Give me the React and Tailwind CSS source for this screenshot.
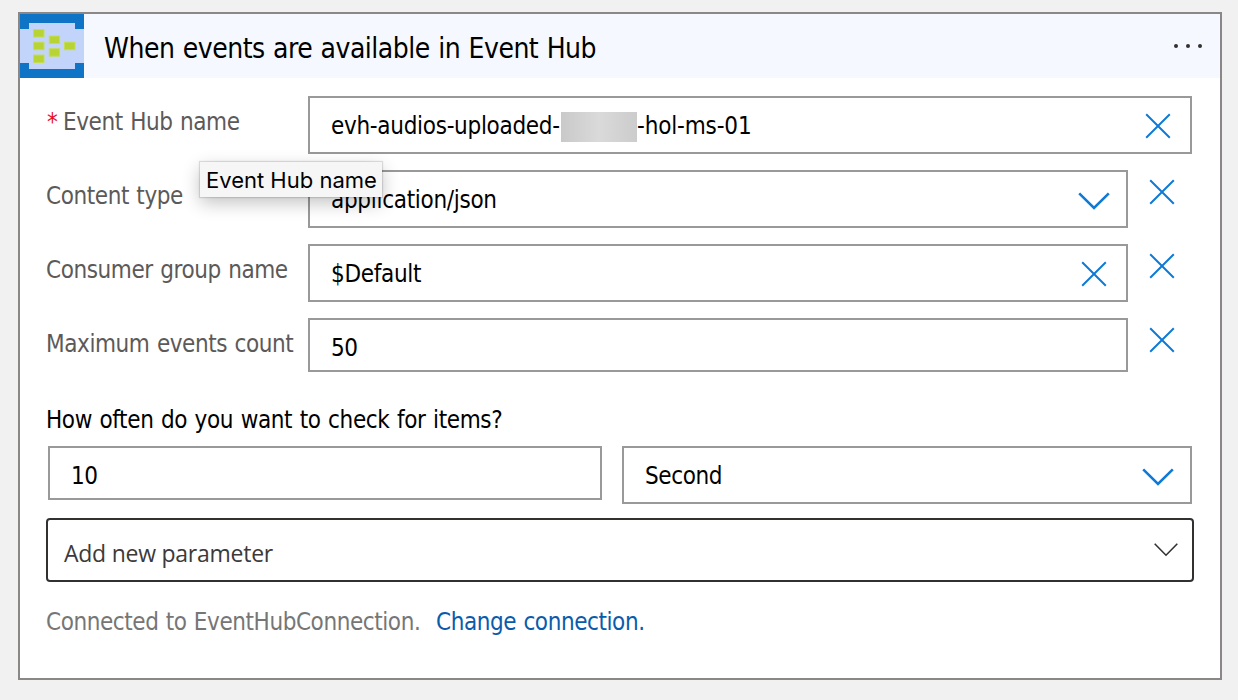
function Cross({ className = "" }) {
  return (
    <svg width="26" height="26" viewBox="0 0 26 26" fill="none" stroke="#0f7ad6" strokeWidth="2" className={`shrink-0 ${className}`}>
      <path d="M1.2 1.2 24.8 24.8M24.8 1.2 1.2 24.8" />
    </svg>
  );
}

function Chevron({ className = "" }) {
  return (
    <svg width="32" height="18" viewBox="0 0 32 18" fill="none" stroke="#0f7ad6" strokeWidth="2.6" className={`shrink-0 ${className}`}>
      <path d="M1.2 1.4 16 16 30.8 1.4" />
    </svg>
  );
}

function EventHubIcon() {
  return (
    <svg width="64" height="64" viewBox="0 0 64 64" className="shrink-0">
      <rect width="64" height="64" fill="#c3d4fb" />
      <path d="M0 0h64v15h-9V9H9v6H0zM0 64h64V49h-9v6H9v-6H0z" fill="#1074c6" />
      <g fill="#b8d434" stroke="#c4dd55" strokeWidth="1">
        <rect x="13.5" y="15.5" width="10.5" height="7.5" />
        <rect x="13.5" y="28.2" width="10.5" height="7.5" />
        <rect x="13.5" y="41" width="10.5" height="7.5" />
        <rect x="29.3" y="22" width="10.3" height="7.5" />
        <rect x="29.3" y="34.7" width="10.3" height="7.5" />
        <rect x="44.5" y="28.2" width="10.5" height="7.5" />
      </g>
    </svg>
  );
}

function Row({ label, required, fieldClass = "h-[58px] w-[820px]", removable = true, children }) {
  return (
    <div className="flex items-start">
      <div className="flex w-[262px] shrink-0 pt-[10px] leading-[32px] tracking-[-0.42px] text-[#5c5a59] [word-spacing:1px]">
        {required && <span className="w-[17px] shrink-0 pl-px tracking-normal text-[#e81123]">*</span>}
        <span className="whitespace-nowrap">{label}</span>
      </div>
      <div className={`flex shrink-0 items-center border-2 border-[#999] pt-[2px] pl-[21px] leading-[32px] tracking-[-0.3px] ${fieldClass}`}>
        {children}
      </div>
      {removable && <Cross className="mt-[9px] ml-[21px]" />}
    </div>
  );
}

export default function App() {
  return (
    <div className="h-[700px] w-[1238px] overflow-hidden bg-[#f1f1f1] pt-3 pl-[18px] font-['DejaVu_Sans_Condensed','DejaVu_Sans',sans-serif] text-[24px] text-black">
      <div className="relative h-[668px] w-[1204px] border-2 border-[#8b8787] bg-white">
        <header className="flex h-16 items-center bg-[#f5f9ff]">
          <EventHubIcon />
          <h1 className="ml-5 pt-[6px] text-[28px] leading-[36px] tracking-[-0.5px] [word-spacing:0.9px]">When events are available in Event Hub</h1>
          <svg width="30" height="6" viewBox="0 0 30 6" fill="#323130" className="mr-[17px] ml-auto">
            <circle cx="3" cy="3" r="2" />
            <circle cx="15" cy="3" r="2" />
            <circle cx="27" cy="3" r="2" />
          </svg>
        </header>

        <div className="flex flex-col gap-4 pt-[18px] pl-[26px]">
          <Row label="Event Hub name" required removable={false} fieldClass="h-[58px] w-[884px]">
            <span className="w-[230px] whitespace-nowrap">evh-audios-uploaded-</span>
            <span className="mt-[2px] h-[30px] w-[76px] bg-linear-to-r from-[#c9c9c9] via-[#dadada] to-[#cccccc]" />
            <span className="tracking-[-0.15px]">-hol-ms-01</span>
            <Cross className="mr-[19px] ml-auto" />
          </Row>
          <Row label="Content type">
            <span>application/json</span>
            <Chevron className="mt-px mr-4 ml-auto" />
          </Row>
          <Row label="Consumer group name">
            <span>$Default</span>
            <Cross className="mr-[19px] ml-auto" />
          </Row>
          <Row label="Maximum events count" fieldClass="h-[54px] w-[820px]">
            <span className="pt-1 tracking-[-0.6px]">50</span>
          </Row>
        </div>

        <div className="pt-8 pl-[26px] leading-[32px] tracking-[-0.37px] [word-spacing:1px]">How often do you want to check for items?</div>
        <div className="flex items-start gap-5 pt-[10px] pl-7 leading-[32px] tracking-[-0.4px]">
          <div className="flex h-[54px] w-[554px] items-center border-2 border-[#999] pt-[6px] pl-[21px]">10</div>
          <div className="flex h-[58px] w-[570px] items-center border-2 border-[#999] pt-[2px] pl-[21px]">
            Second
            <Chevron className="mt-px mr-4 ml-auto" />
          </div>
        </div>

        <div className="mt-[14px] ml-[26px] flex h-[64px] w-[1148px] items-center rounded-[4px] border-2 border-[#323130] pl-4 font-['Open_Sans','Noto_Sans',sans-serif] text-[23px] tracking-[-0.25px] text-[#3b3a39]">
          <span className="pt-[7px]">Add new parameter</span>
          <svg width="24" height="14" viewBox="0 0 24 14" fill="none" stroke="#323130" strokeWidth="1.6" className="mr-[14px] ml-auto">
            <path d="M.7.8 12 12.2 23.3.8" />
          </svg>
        </div>

        <div className="flex pt-[24px] pl-[26px] leading-[32px] tracking-[-0.42px] [word-spacing:0.8px]">
          <span className="w-[390px] text-[#767676]">Connected to EventHubConnection.</span>
          <span className="text-[#0a5bab]">Change connection.</span>
        </div>

        <div className="absolute top-[148px] left-[180px] flex h-[35px] w-[182px] items-center bg-[#f6f6f6] pt-px pl-[6px] font-['Inter',sans-serif] text-[22px] whitespace-nowrap shadow-[0_0_1px_1px_rgba(0,0,0,0.12),0_6px_18px_rgba(0,0,0,0.24)]">
          Event Hub name
        </div>
      </div>
    </div>
  );
}
